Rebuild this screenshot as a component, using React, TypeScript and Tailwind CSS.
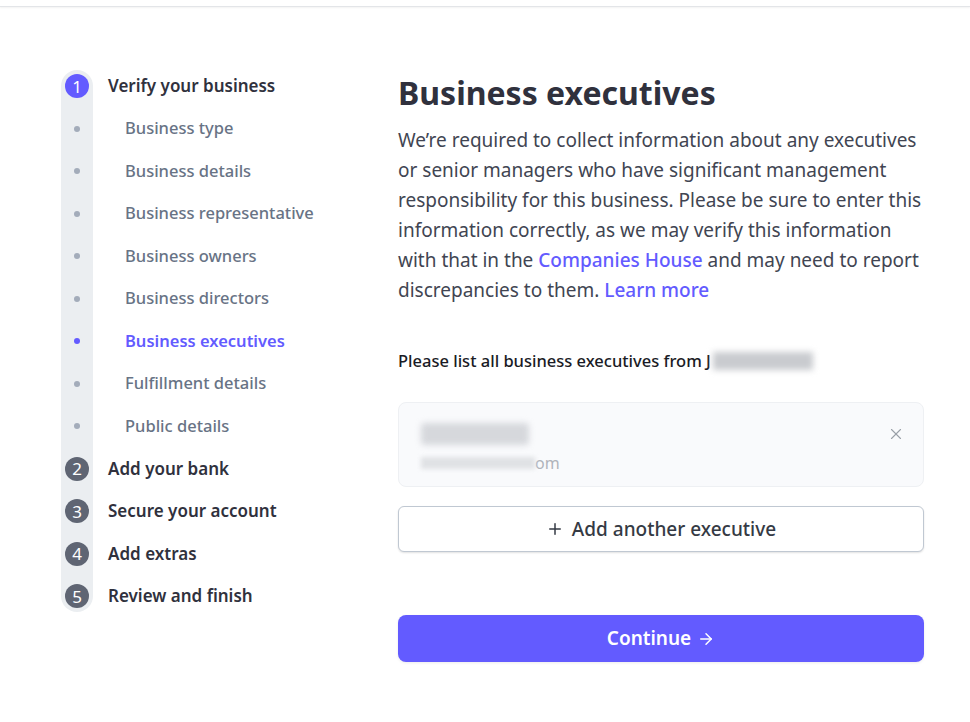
import { ArrowRight, Plus, X } from "lucide-react";

type Step = { label: string; kind: "main" | "sub"; num?: number; active?: boolean };

const steps: Step[] = [
  { label: "Verify your business", kind: "main", num: 1, active: true },
  { label: "Business type", kind: "sub" },
  { label: "Business details", kind: "sub" },
  { label: "Business representative", kind: "sub" },
  { label: "Business owners", kind: "sub" },
  { label: "Business directors", kind: "sub" },
  { label: "Business executives", kind: "sub", active: true },
  { label: "Fulfillment details", kind: "sub" },
  { label: "Public details", kind: "sub" },
  { label: "Add your bank", kind: "main", num: 2 },
  { label: "Secure your account", kind: "main", num: 3 },
  { label: "Add extras", kind: "main", num: 4 },
  { label: "Review and finish", kind: "main", num: 5 },
];

function StepIcon({ step }: { step: Step }) {
  if (step.kind === "main") {
    return (
      <div
        className={
          step.active
            ? "w-6 h-6 rounded-full bg-[#635bff] text-white flex items-center justify-center text-[17px] leading-none"
            : "w-6 h-6 rounded-full bg-[#5f6573] text-white flex items-center justify-center text-[17px] leading-none"
        }
      >
        {step.num}
      </div>
    );
  }
  return (
    <div className="w-6 h-6 flex items-center justify-center">
      <div
        className={
          step.active
            ? "w-[6px] h-[6px] rounded-full bg-[#635bff]"
            : "w-[6px] h-[6px] rounded-full bg-[#a3acba]"
        }
      />
    </div>
  );
}

function Sidebar() {
  return (
    <div className="flex items-start w-[398px] shrink-0 pl-[61px] pt-[1px]">
      <div className="flex flex-col gap-[18.5px] p-1 bg-[#ebeef1] rounded-full">
        {steps.map((s) => (
          <StepIcon key={s.label} step={s} />
        ))}
      </div>
      <div className="flex flex-col gap-[18.5px] py-1 pl-[15px]">
        {steps.map((s) => (
          <div
            key={s.label}
            className={
              s.kind === "main"
                ? "h-6 flex items-center whitespace-nowrap text-[17px] font-semibold text-[#30313d]"
                : s.active
                ? "h-6 flex items-center whitespace-nowrap pl-[17px] text-[16.5px] font-semibold text-[#635bff]"
                : "h-6 flex items-center whitespace-nowrap pl-[17px] text-[16.5px] font-medium text-[#687385]"
            }
          >
            {s.label}
          </div>
        ))}
      </div>
    </div>
  );
}

export default function App() {
  return (
    <div
      className="min-h-screen bg-white"
      style={{ fontFamily: '"Noto Sans", "Open Sans", sans-serif' }}
    >
      <div className="h-[7px] border-b border-[#e3e5e8] shadow-[0_1px_2px_rgba(0,0,0,0.05)]" />
      <div className="flex items-start pt-[62px]">
        <Sidebar />
        <div className="w-[526px] flex flex-col">
          <h1 className="text-[32px] font-bold leading-[40px] text-[#30313d] mt-[4px]">
            Business executives
          </h1>
          <p className="mt-[12px] text-[19px] leading-[30px] text-[#414552]">
            We’re required to collect information about any executives or senior managers who
            have significant management responsibility for this business. Please be sure to
            enter this information correctly, as we may verify this information with that in the{" "}
            <span className="text-[#635bff] font-medium">Companies House</span> and may need to
            report discrepancies to them.{" "}
            <span className="text-[#635bff] font-medium">Learn more</span>
          </p>
          <div className="mt-[44px] text-[16.5px] font-medium text-[#1a1b25] leading-6 flex items-center">
            Please list all business executives from J
            <span className="inline-block w-[100px] h-[18px] ml-[2px] bg-[#c9cbcf] blur-[3px]" />
          </div>
          <div className="mt-[29px] h-[85px] rounded-lg border border-[#eef0f3] bg-[#f9fafc] flex items-start justify-between pl-[22px] pr-[18px] pt-[20px]">
            <div className="flex flex-col">
              <div className="w-[108px] h-[22px] bg-[#d6d8dc] blur-[3px] rounded-sm" />
              <div className="mt-[8px] text-[16px] text-[#b0b4bb] leading-5 flex items-center">
                <span className="inline-block w-[114px] h-[12px] bg-[#e0e2e5] blur-[2px]" />
                <span>om</span>
              </div>
            </div>
            <X className="w-[18px] h-[18px] text-[#9aa0a8] mt-[2px]" strokeWidth={1.5} />
          </div>
          <button className="mt-[19px] h-[46px] rounded-md border border-[#c0c8d2] bg-white shadow-[0_1px_2px_rgba(0,0,0,0.12)] flex items-center justify-center gap-2 text-[19px] font-medium text-[#353a44]">
            <Plus className="w-[18px] h-[18px]" strokeWidth={2} />
            Add another executive
          </button>
          <button className="mt-[63px] h-[47px] rounded-lg bg-[#635bff] flex items-center justify-center gap-[6px] text-[19px] font-semibold text-white shadow-[0_1px_3px_rgba(0,0,0,0.08)]">
            Continue
            <ArrowRight className="w-[18px] h-[18px]" strokeWidth={2} />
          </button>
        </div>
      </div>
    </div>
  );
}
